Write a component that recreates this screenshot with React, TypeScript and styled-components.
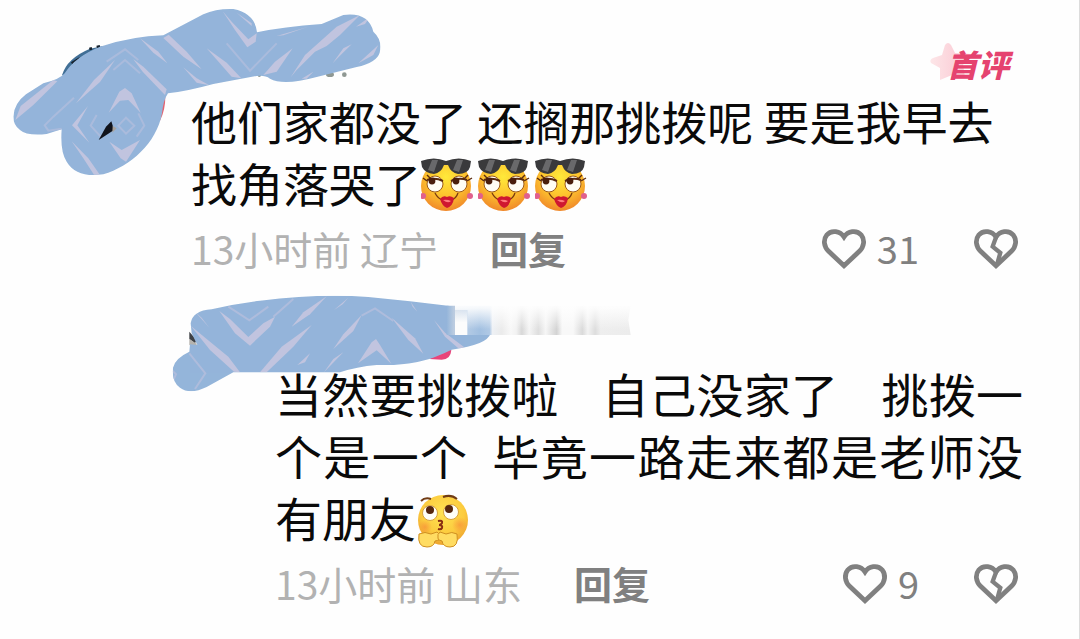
import React from "react";
import styled, { createGlobalStyle } from "styled-components";

const GlobalStyle = createGlobalStyle`
  * { box-sizing: border-box; }
  body {
    margin: 0;
    background: #fefefe;
    color: #0a0a0a;
    font-family: "Noto Sans CJK SC", sans-serif;
  }
`;

const Thread = styled.main`
  position: relative;
  display: flex;
  flex-direction: column;
  min-height: 100vh;
  padding: 39px 56px 16px 191px;
  border-right: 1px solid #dcdcdc;
`;

const Comment = styled.article<{ $reply?: boolean }>`
  display: flex;
  flex-direction: column;
  padding-left: ${(p) => (p.$reply ? 84 : 0)}px;
`;

const Header = styled.header<{ $tall?: boolean }>`
  display: flex;
  justify-content: flex-end;
  height: ${(p) => (p.$tall ? 80 : 50)}px;
  padding-right: 14px;
`;

const Badge = styled.span`
  position: relative;
  display: flex;
  align-items: center;
  height: 50px;
  color: #e5436f;
  font-size: 31px;
  font-weight: 900;
  font-style: italic;
  line-height: 50px;
`;

const BadgeStar = styled.svg`
  position: absolute;
  left: -18px;
  top: 2px;
  z-index: -1;
`;

const Body = styled.p<{ $size: number; $justify?: boolean }>`
  margin: 0;
  font-size: ${(p) => p.$size}px;
  line-height: 62px;
  text-align: ${(p) => (p.$justify ? "justify" : "left")};
`;

const Emoji = styled.svg<{ $gap: number }>`
  width: 54px;
  height: 56px;
  margin-right: ${(p) => p.$gap}px;
  vertical-align: -12px;
`;

const Footer = styled.footer`
  display: flex;
  align-items: center;
  height: 68px;
  font-size: 39px;
  line-height: 68px;
`;

const Meta = styled.span`
  color: #b2b2b2;
  font-weight: 400;
`;

const TextButton = styled.button`
  margin-left: 52px;
  padding: 0;
  border: 0;
  background: none;
  color: #808080;
  font: inherit;
  font-size: 38px;
  font-weight: 700;
  cursor: pointer;
`;

const Actions = styled.div`
  display: flex;
  align-items: center;
  gap: 54px;
  margin-left: auto;
  padding-right: 4px;
`;

const IconButton = styled.button`
  display: flex;
  align-items: center;
  gap: 10px;
  padding: 0;
  border: 0;
  background: none;
  color: #808080;
  font: inherit;
  font-size: 38px;
  cursor: pointer;
`;

const HeartIcon = styled.svg`
  width: 46px;
  height: 42px;
  overflow: visible;
  fill: none;
  stroke: currentColor;
  stroke-width: 5;
`;

const Scribble = styled.svg<{ $x: number; $y: number }>`
  position: absolute;
  left: ${(p) => p.$x}px;
  top: ${(p) => p.$y}px;
  pointer-events: none;
`;

const heartPath =
  "M24 9C20 3 11 1 6 7C2 12 3 19 8 24L24 39L40 24C45 19 46 12 42 7C37 1 28 3 24 9Z";

function Heart({ broken }: { broken?: boolean }) {
  return (
    <HeartIcon viewBox="0 -1 48 43" aria-hidden="true">
      <path d={heartPath} />
      {broken && <path d="M24.5 8L20.5 19L28.5 25.5L25 38" strokeWidth="4.5" />}
    </HeartIcon>
  );
}

function SassyEmoji() {
  return (
    <Emoji $gap={3} viewBox="0 0 54 56" role="img" aria-label="墨镜表情">
      <defs>
        <radialGradient id="sassy" cx=".5" cy=".32" r=".68">
          <stop offset="0" stopColor="#ffe93a" />
          <stop offset=".55" stopColor="#fdc32e" />
          <stop offset="1" stopColor="#f0882a" />
        </radialGradient>
      </defs>
      <circle cx="25" cy="28" r="25" fill="url(#sassy)" />
      <circle cx="2" cy="38" r="3" fill="#e0608c" />
      <circle cx="49" cy="38" r="3" fill="#e0608c" />
      <g fill="#fffdf4" stroke="#9b5a1c" strokeWidth="1">
        <circle cx="14" cy="26" r="8" />
        <circle cx="38" cy="26" r="8" />
      </g>
      <path d="M6 22Q14 19 22 23M30 23Q38 19 46 22" fill="none" stroke="#5b2b10" strokeWidth="2" />
      <path d="M6 23L2 20M10 21L6 17M43 21L47 17M46 23L51 20" stroke="#5b2b10" strokeWidth="1.4" />
      <circle cx="11" cy="23" r="3.4" fill="#4a1e0c" />
      <circle cx="35" cy="23" r="3.4" fill="#4a1e0c" />
      <path d="M14 35Q17 41 22 42M37 35Q35 41 30 42" fill="none" stroke="#7a3b10" strokeWidth="1.3" />
      <path d="M19 41Q22 37 26 39Q29 37 33 40Q32 48 26 50Q21 48 19 41Z" fill="#cf1730" />
      <path d="M22 42Q26 41 30 43Q27 46 22 42Z" fill="#ff7a7d" />
      <path d="M0 3Q13 -2 25 3Q38 -2 50 3L49 9Q47 16 37 16Q30 15 27 7L23 7Q20 15 13 16Q4 15 1 9Z" fill="#3a3a3c" />
      <path d="M11 2L17 2L13 14L7 12ZM36 2L42 2L38 14L32 12Z" fill="#88888a" opacity=".6" />
    </Emoji>
  );
}

function PoutEmoji() {
  return (
    <Emoji $gap={0} viewBox="0 0 54 56" role="img" aria-label="嘟嘴表情">
      <defs>
        <radialGradient id="pout" cx=".5" cy=".35" r=".65">
          <stop offset="0" stopColor="#ffe253" />
          <stop offset=".65" stopColor="#fccb3e" />
          <stop offset="1" stopColor="#eda32e" />
        </radialGradient>
        <radialGradient id="blush">
          <stop offset="0" stopColor="#f8963a" stopOpacity=".8" />
          <stop offset="1" stopColor="#f8963a" stopOpacity="0" />
        </radialGradient>
      </defs>
      <circle cx="27" cy="27" r="25" fill="url(#pout)" />
      <circle cx="9" cy="34" r="7" fill="url(#blush)" />
      <circle cx="44" cy="32" r="8" fill="url(#blush)" />
      <circle cx="14" cy="20" r="7.5" fill="#fffef8" stroke="#d9a23a" />
      <circle cx="35" cy="19" r="7.5" fill="#fffef8" stroke="#d9a23a" />
      <circle cx="14" cy="17" r="4" fill="#55260f" />
      <circle cx="33" cy="16" r="4" fill="#55260f" />
      <path d="M5 8Q9 4 15 6M27 4Q35 1 41 6" fill="none" stroke="#713c15" strokeWidth="2" />
      <path d="M22 28Q27 27 26 30Q25 32 23 32Q27 32 26 35Q25 37 22 36" fill="none" stroke="#8a2d12" strokeWidth="2" />
      <path d="M3 41Q9 38 15 41L21 39Q25 41 23 45Q25 47 19 48Q18 54 11 54Q1 54 3 41Z" fill="#ffdc62" stroke="#cf8f20" />
      <path d="M41 41Q36 38 30 41L24 39Q21 41 22 45Q21 47 26 48Q27 54 34 54Q43 54 41 41Z" fill="#ffdc62" stroke="#cf8f20" />
    </Emoji>
  );
}

function TopScribble() {
  return (
    <Scribble $x={0} $y={0} width="400" height="190" viewBox="0 0 1200 570" aria-hidden="true">
      <path d="M186 226Q200 175 270 146L310 138L240 230Z" fill="#416f96" />
      <path d="M215 190L240 175M268 147L276 145M290 141L300 139" stroke="#16222e" strokeWidth="8" fill="none" />
      <path d="M478 300L496 290Q496 330 480 362Z" fill="#e3616f" />
      <g fill="#8f9893">
        <circle cx="1033" cy="224" r="7" />
        <ellipse cx="990" cy="224" rx="12" ry="7" />
        <circle cx="778" cy="226" r="5" />
      </g>
      <clipPath id="topShape">
        <path d="M40 350Q42 310 78 283L130 250Q180 238 194 220Q225 170 300 140Q400 108 490 106L610 43Q650 25 700 27Q765 40 771 97Q850 80 965 72L1030 45Q1105 35 1120 95Q1148 120 1139 158Q1130 188 1070 201L950 231Q850 258 810 236Q795 225 770 228L640 252Q560 274 504 280Q490 300 486 340C470 430 390 500 310 523Q230 535 200 485Q180 455 185 388L140 402Q80 408 60 390Q40 375 40 350Z" />
      </clipPath>
      <g clipPath="url(#topShape)">
        <rect width="1200" height="570" fill="#94b5da" />
        <g fill="#ccc9e0" opacity=".8">
          <path d="M46 360L62 318L160 240L172 244L100 315Z" />
          <path d="M228 310L282 240L345 180L300 246Z" />
          <path d="M400 178L430 200L500 268L495 285L428 215Z" />
          <path d="M326 338L358 275L375 264L395 280L422 338L385 300L360 302Z" />
          <path d="M216 376L264 318L232 376L268 428Z" />
          <path d="M328 425L365 450L420 420L378 485L362 475Z" />
          <path d="M215 424L265 475L300 525L282 524L250 475Z" />
          <path d="M490 114L506 104L560 155L605 208L550 170Z" />
          <path d="M420 115L475 155L502 190L460 158Z" />
          <path d="M550 202L590 235L628 256L590 248Z" />
          <path d="M620 145L680 188L724 235L695 230Z" />
          <path d="M668 34L695 65L745 118L770 100L767 125L742 142L705 90Z" />
          <path d="M872 232L915 165L1010 80L1080 45L1020 105L980 138L945 155L890 210Z" />
          <path d="M790 225L825 185L878 145L830 215Z" />
          <path d="M905 236L940 215L920 236ZM998 190L1030 145L1055 133L1022 165ZM1075 190L1135 135L1120 165Z" />
          <path d="M1068 80L1110 50L1095 72ZM710 38L755 70L755 78ZM830 108L925 80L850 106Z" />
        </g>
        <g fill="none" stroke="#aabbdc" strokeWidth="6">
          <path d="M222 293L160 350L134 376L145 392L185 386M320 185L375 148L415 180M340 210L375 180L420 220M378 353L403 377L378 401L355 377ZM290 345L272 377L305 413M415 340L433 377L410 410M680 130L750 212L830 130" />
        </g>
      </g>
      <path d="M296 420L318 380L334 364L342 390Z" fill="#10131b" />
      <path d="M338 378L350 385L337 398Z" fill="#a9a39d" />
    </Scribble>
  );
}

function ReplyScribble() {
  return (
    <Scribble $x={160} $y={285} width="490" height="120" viewBox="0 0 1470 360" aria-hidden="true">
      <defs>
        <linearGradient id="smear" x1="860" x2="1410" y1="0" y2="0" gradientUnits="userSpaceOnUse">
          <stop offset="0" stopColor="#94b5da" />
          <stop offset=".04" stopColor="#bccce0" />
          <stop offset=".11" stopColor="#b4cbe5" />
          <stop offset=".18" stopColor="#a2c0e1" />
          <stop offset=".235" stopColor="#b0c9e5" />
          <stop offset=".25" stopColor="#eef1f5" />
          <stop offset=".3" stopColor="#ebebeb" />
          <stop offset=".35" stopColor="#f8f8f8" />
          <stop offset=".38" stopColor="#f2f2f2" />
          <stop offset=".41" stopColor="#d8d8d8" />
          <stop offset=".45" stopColor="#f5f5f5" />
          <stop offset=".5" stopColor="#dedede" />
          <stop offset=".54" stopColor="#f6f6f6" />
          <stop offset=".6" stopColor="#d3d3d3" />
          <stop offset=".63" stopColor="#f8f8f8" />
          <stop offset=".69" stopColor="#f8f8f8" />
          <stop offset=".74" stopColor="#dadada" />
          <stop offset=".77" stopColor="#f3f3f3" />
          <stop offset=".81" stopColor="#dddddd" />
          <stop offset=".84" stopColor="#eeeeee" />
          <stop offset="1" stopColor="#ececec" />
        </linearGradient>
        <linearGradient id="smearFade" x1="0" x2="0" y1="0" y2="1">
          <stop offset="0" stopColor="#fefefe" />
          <stop offset=".15" stopColor="#fefefe" stopOpacity=".9" />
          <stop offset=".8" stopColor="#fefefe" stopOpacity="0" />
        </linearGradient>
        <linearGradient id="gapFade" x1="0" x2="0" y1="0" y2="1">
          <stop offset="0" stopColor="#fcfcfc" stopOpacity=".5" />
          <stop offset=".5" stopColor="#fcfcfc" />
        </linearGradient>
      </defs>
      <path d="M88 140L110 165L105 175L88 162Z" fill="#3e4145" />
      <path d="M88 162L112 178L100 184L88 180Z" fill="#b5b3ae" />
      <path d="M808 222L860 190L874 195Q872 224 845 224Z" fill="#e8447a" />
      <clipPath id="replyShape">
        <path d="M92 115Q98 77 155 73Q230 55 300 47Q480 25 625 36L750 49L870 63L960 72Q992 90 992 145Q982 180 875 194C810 225 760 242 650 240Q590 245 540 262L220 262L140 306Q90 330 60 308Q34 290 39 248Q45 220 88 200L90 178L112 180L95 145Z" />
      </clipPath>
      <g clipPath="url(#replyShape)">
        <rect width="1470" height="360" fill="#94b5da" />
        <g fill="#ccc9e0" opacity=".8">
          <path d="M92 122L140 162L205 215L240 262L222 260L150 195Z" />
          <path d="M105 80L125 98L148 128Z" />
          <path d="M178 78L210 102L265 156L310 115L345 95L330 125L270 182L225 145Z" />
          <path d="M300 262L365 185L455 120L400 185L320 262Z" />
          <path d="M395 125L430 82L500 34L450 88Z" />
          <path d="M492 262L520 222L550 202ZM412 240L450 205L435 232Z" />
          <path d="M520 192L550 148L605 90L580 138Z" />
          <path d="M695 98L765 160L790 206L745 165Z" />
          <path d="M594 235L635 172L648 162L660 180L694 236L650 196Z" />
          <path d="M822 105L855 143L915 188L895 190L855 155ZM752 50L772 80L758 65ZM522 75L565 38L548 58Z" />
        </g>
        <path d="M205 65L268 106L325 65M340 95L400 42M605 92L645 70L700 108M88 205L136 265L105 312M38 258L48 268L40 285" fill="none" stroke="#aebcdc" strokeWidth="6" />
      </g>
      <path d="M860 62H1412L1405 105L1412 150H860Z" fill="url(#smear)" />
      <path d="M885 55H1414V152H990V150H922V75H885Z" fill="url(#smearFade)" />
      <path d="M885 75H922V150H885Z" fill="url(#gapFade)" />
    </Scribble>
  );
}

const topText = "他们家都没了 还搁那挑拨呢 要是我早去找角落哭了";
const replyText =
  "当然要挑拨啦\u00a0\u00a0\u00a0 自己没家了\u00a0\u00a0\u00a0 挑拨一个是一个\u00a0\u00a0 毕竟一路走来都是老师没有朋友".replace(
    "个\u00a0\u00a0 毕",
    "个\u00a0 毕"
  );

interface FooterProps {
  time: string;
  place: string;
  likes: number;
}

function CommentFooter({ time, place, likes }: FooterProps) {
  return (
    <Footer>
      <Meta>{`${time} ${place}`}</Meta>
      <TextButton type="button">回复</TextButton>
      <Actions>
        <IconButton type="button" aria-label={`赞 ${likes}`}>
          <Heart />
          {likes}
        </IconButton>
        <IconButton type="button" aria-label="踩">
          <Heart broken />
        </IconButton>
      </Actions>
    </Footer>
  );
}

export default function App() {
  return (
    <>
      <GlobalStyle />
      <Thread>
        <Comment>
          <Header>
            <Badge>
              <BadgeStar width="46" height="44" viewBox="0 0 46 44" aria-hidden="true">
                <defs>
                  <linearGradient id="star" x1="0" x2="1">
                    <stop offset="0" stopColor="#fde6e8" />
                    <stop offset="1" stopColor="#fac3cf" />
                  </linearGradient>
                </defs>
                <path d="M16 4Q19 0 22 4L26 12L42 13L34 24L36 36L23 34L11 39L11 27L2 22Q0 19 4 17L13 14Z" fill="url(#star)" />
              </BadgeStar>
              首评
            </Badge>
          </Header>
          <Body $size={46}>
            {topText}
            <SassyEmoji />
            <SassyEmoji />
            <SassyEmoji />
          </Body>
          <CommentFooter time="13小时前" place="辽宁" likes={31} />
        </Comment>
        <Comment $reply>
          <Header $tall />
          <Body $size={47} $justify>
            {replyText}
            <PoutEmoji />
          </Body>
          <CommentFooter time="13小时前" place="山东" likes={9} />
        </Comment>
        <TopScribble />
        <ReplyScribble />
      </Thread>
    </>
  );
}
